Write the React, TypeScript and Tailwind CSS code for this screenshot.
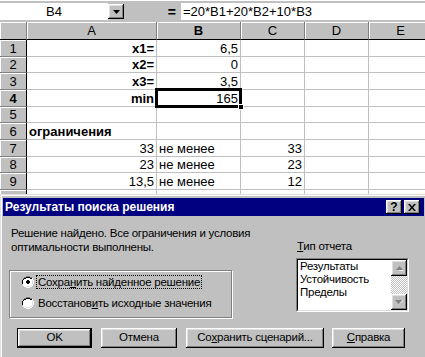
import React from "react";

const raised =
  "shadow-[inset_-1px_-1px_0_#000,inset_1px_1px_0_#fff,inset_-2px_-2px_0_#808080,inset_2px_2px_0_#dfdfdf]";

const dlgText = "text-[11.5px] tracking-[-0.25px]";

type CellProps = {
  w: string;
  text?: string;
  align?: "l" | "r";
  bold?: boolean;
  children?: React.ReactNode;
  extra?: string;
};

function Cell({ w, text, align = "r", bold, children, extra = "" }: CellProps) {
  return (
    <div
      className={`${w} shrink-0 h-full box-border border-r border-b border-[#c0c0c0] flex items-end overflow-visible whitespace-nowrap text-[13px] leading-[15px] ${
        align === "r" ? "justify-end pr-[2px]" : "justify-start pl-[2px]"
      } ${bold ? "font-bold" : ""} ${extra}`}
    >
      {text}
      {children}
    </div>
  );
}

function RowHead({ n, bold }: { n?: number; bold?: boolean }) {
  return (
    <div
      className={`w-[27px] shrink-0 h-full box-border bg-[#c0c0c0] border-r border-b border-r-black border-b-[#808080] shadow-[inset_1px_1px_0_#fff] flex items-center justify-center text-[13px] leading-none ${
        bold ? "font-bold" : ""
      }`}
    >
      {n}
    </div>
  );
}

function ColHead({ w, label, bold }: { w: string; label?: string; bold?: boolean }) {
  return (
    <div
      className={`${w} shrink-0 h-full box-border bg-[#c0c0c0] border-r border-b border-r-[#808080] border-b-black shadow-[inset_1px_1px_0_#fff] flex items-center justify-center text-[13px] leading-none ${
        bold ? "font-bold" : ""
      }`}
    >
      {label}
    </div>
  );
}

type RowData = {
  h: string;
  key: number;
  n?: number;
  a?: string;
  aAlign?: "l" | "r";
  aBold?: boolean;
  b?: string;
  bAlign?: "l" | "r";
  c?: string;
  headBold?: boolean;
  sel?: boolean;
};

const rows: RowData[] = [
  { h: "h-[17px]", key: 1, n: 1, a: "x1=", aBold: true, b: "6,5" },
  { h: "h-[16px]", key: 2, n: 2, a: "x2=", aBold: true, b: "0" },
  { h: "h-[17px]", key: 3, n: 3, a: "x3=", aBold: true, b: "3,5" },
  { h: "h-[17px]", key: 4, n: 4, a: "min", aBold: true, b: "165", headBold: true, sel: true },
  { h: "h-[16px]", key: 5, n: 5 },
  { h: "h-[17px]", key: 6, n: 6, a: "ограничения", aAlign: "l", aBold: true },
  { h: "h-[17px]", key: 7, n: 7, a: "33", b: "не менее", bAlign: "l", c: "33" },
  { h: "h-[16px]", key: 8, n: 8, a: "23", b: "не менее", bAlign: "l", c: "23" },
  { h: "h-[17px]", key: 9, n: 9, a: "13,5", b: "не менее", bAlign: "l", c: "12" },
  { h: "h-[17px]", key: 10 },
];

function Radio({ checked }: { checked?: boolean }) {
  return (
    <svg width="12" height="12" viewBox="0 0 12 12" className="shrink-0">
      <path d="M4 0h4v1h2v1h1v2h1v4h-1v2h-1v1h-2v1h-4v-1h-2v-1h-1v-2h-1v-4h1v-2h1v-1h2z" fill="#fff" />
      <path d="M4 0h4v1h2v1h-2v-1h-4v1h-2v2h-1v4h-1v-4h1v-2h1v-1h2z" fill="#808080" />
      <path d="M4 1h4v1h2v1h-2v-1h-4v1h-2v1h-1v4h-1v-4h1v-1h1v-1h2z" fill="#000" />
      <path d="M10 2h1v2h1v4h-1v2h-1v1h-2v1h-4v-1h-2v-1h2v1h4v-1h2v-2h1v-4h-1z" fill="#fff" />
      <path d="M10 3h0.01v1h0.99v4h-1v2h-2v1h-4v-1h4v-1h2v-2h0v-4z" fill="#dfdfdf" />
      {checked && <path d="M5 4h2v1h1v2h-1v1h-2v-1h-1v-2h1z" fill="#000" />}
    </svg>
  );
}

function Btn({
  w,
  children,
  def,
}: {
  w: string;
  children: React.ReactNode;
  def?: boolean;
}) {
  return (
    <div
      className={`${w} h-[20px] box-border bg-[#c0c0c0] flex items-center justify-center leading-none whitespace-nowrap ${dlgText} ${
        def ? "border border-black" : ""
      } ${raised}`}
    >
      {children}
    </div>
  );
}

export default function App() {
  return (
    <div className="w-[425px] h-[357px] overflow-hidden bg-[#c0c0c0] font-['Liberation_Sans',Arial,sans-serif] text-black">
      {/* spreadsheet area */}
      <div className="h-[194px] overflow-hidden bg-white flex flex-col">
        <div className="h-[3px] shrink-0 bg-[#c0c0c0] border-t border-white" />
        {/* formula bar */}
        <div className="h-[19px] shrink-0 bg-[#c0c0c0] flex items-start">
          <div className="w-[108px] h-[17px] bg-white flex items-center justify-center text-[13px] leading-none">
            B4
          </div>
          <div className={`w-[16px] h-[15px] mt-[1px] bg-[#c0c0c0] flex items-center justify-center ${raised}`}>
            <svg width="7" height="4" viewBox="0 0 7 4">
              <path d="M0 0h7l-3.5 4z" fill="#000" />
            </svg>
          </div>
          <div className="w-[57px] h-[17px] flex items-center justify-end pr-[5px] text-[14px] font-bold leading-none">
            =
          </div>
          <div className="flex-1 h-[17px] bg-white flex items-center pl-[2px] text-[13px] leading-none whitespace-nowrap">
            =20*B1+20*B2+10*B3
          </div>
        </div>
        {/* column headers */}
        <div className="h-[18px] shrink-0 flex">
          <ColHead w="w-[27px]" />
          <ColHead w="w-[130px]" label="A" />
          <ColHead w="w-[84px]" label="B" bold />
          <ColHead w="w-[64px]" label="C" />
          <ColHead w="w-[64px]" label="D" />
          <ColHead w="w-[64px]" label="E" />
        </div>
        {rows.map((r) => (
          <div key={r.key} className={`${r.h} shrink-0 flex`}>
            <RowHead n={r.n} bold={r.headBold} />
            <Cell w="w-[130px]" text={r.a} align={r.aAlign ?? "r"} bold={r.aBold} />
            <Cell w="w-[84px]" text={r.b} align={r.bAlign ?? "r"} extra={r.sel ? "relative z-10" : ""}>
              {r.sel && (
                <>
                  <div className="absolute left-[-2px] top-[-2px] right-[-2px] bottom-[-2px] border-[3px] border-black" />
                  <div className="absolute right-[-4px] bottom-[-4px] w-[6px] h-[6px] bg-black border border-white" />
                </>
              )}
            </Cell>
            <Cell w="w-[64px]" text={r.c} />
            <Cell w="w-[64px]" />
            <Cell w="w-[64px]" />
          </div>
        ))}
      </div>

      {/* dialog */}
      <div className="h-[163px] bg-[#c0c0c0] pt-[4px] pl-[3px] shadow-[inset_1px_1px_0_#dfdfdf,inset_2px_2px_0_#fff] flex flex-col">
        <div className="h-[18px] shrink-0 mr-[1px] bg-[#000080] flex items-center justify-between pl-[2px] pr-[4px]">
          <span className="text-white font-bold text-[12px] leading-[14px] whitespace-nowrap">
            Результаты поиска решения
          </span>
          <div className="flex gap-[2px]">
            <div className={`w-[16px] h-[14px] bg-[#c0c0c0] flex items-center justify-center text-[12px] font-bold leading-none ${raised}`}>
              ?
            </div>
            <div className={`w-[16px] h-[14px] bg-[#c0c0c0] flex items-center justify-center ${raised}`}>
              <svg width="8" height="7" viewBox="0 0 8 7">
                <path d="M0 0h2l2 2.5 2-2.5h2l-3 3.5 3 3.5h-2l-2-2.5-2 2.5h-2l3-3.5z" fill="#000" />
              </svg>
            </div>
          </div>
        </div>

        <div className="flex shrink-0">
          {/* left column */}
          <div className="w-[229px] pl-[6px] shrink-0">
            <div className={`mt-[10px] pl-[2px] leading-[14px] whitespace-nowrap ${dlgText}`}>
              <div>Решение найдено. Все ограничения и условия</div>
              <div>оптимальности выполнены.</div>
            </div>
            <div className="mt-[16px] w-[223px] h-[48px] box-border border border-[#808080] shadow-[1px_1px_0_#fff,inset_1px_1px_0_#fff] flex flex-col pt-[5px] pl-[12px] gap-[9px]">
              <div className="h-[12px] flex items-center gap-[2px]">
                <Radio checked />
                <span className={`border border-dotted border-black px-[1px] leading-[12px] whitespace-nowrap ${dlgText}`}>
                  Сохра<span className="underline">н</span>ить найденное решение
                </span>
              </div>
              <div className="h-[12px] flex items-center gap-[3px]">
                <Radio />
                <span className={`px-[1px] leading-[12px] whitespace-nowrap ${dlgText}`}>
                  Восстанов<span className="underline">и</span>ть исходные значения
                </span>
              </div>
            </div>
          </div>
          {/* right column */}
          <div className="ml-[64px] w-[113px] shrink-0">
            <div className={`mt-[24px] pl-[1px] leading-[13px] whitespace-nowrap ${dlgText}`}>
              <span className="underline">Т</span>ип отчета
            </div>
            <div className="mt-[5px] w-[113px] h-[54px] box-border bg-white border border-t-[#808080] border-l-[#808080] border-b-white border-r-white">
              <div className="w-full h-full box-border border border-t-black border-l-black border-b-[#dfdfdf] border-r-[#dfdfdf] flex">
                <div className={`flex-1 pl-[2px] leading-[13px] whitespace-nowrap overflow-hidden ${dlgText}`}>
                  <div>Результаты</div>
                  <div>Устойчивость</div>
                  <div>Пределы</div>
                </div>
                <div className="w-[16px] shrink-0 flex flex-col">
                  <div className={`h-[16px] shrink-0 bg-[#c0c0c0] flex items-center justify-center ${raised}`}>
                    <svg width="7" height="5" viewBox="0 0 7 5">
                      <path d="M3.5 0l3.5 4h-7z" fill="#808080" />
                      <path d="M1 5h6v-1z" fill="#fff" />
                    </svg>
                  </div>
                  <div className="flex-1 bg-[repeating-conic-gradient(#fff_0_25%,#c0c0c0_0_50%)] bg-[length:2px_2px]" />
                  <div className={`h-[16px] shrink-0 bg-[#c0c0c0] flex items-center justify-center ${raised}`}>
                    <svg width="8" height="5" viewBox="0 0 8 5">
                      <path d="M0 0h7l-3.5 4z" fill="#808080" />
                      <path d="M4 4.5l4-4.5v1z" fill="#fff" />
                    </svg>
                  </div>
                </div>
              </div>
            </div>
          </div>
        </div>

        {/* buttons */}
        <div className="mt-[10px] pl-[14px] flex gap-[9px] shrink-0">
          <Btn w="w-[75px]" def>
            OK
          </Btn>
          <Btn w="w-[76px]">Отмена</Btn>
          <Btn w="w-[138px]">
            Со<span className="underline">х</span>ранить сценарий...
          </Btn>
          <div className="ml-[-1px]">
            <Btn w="w-[73px]">
              <span className="underline">С</span>правка
            </Btn>
          </div>
        </div>
      </div>
    </div>
  );
}
